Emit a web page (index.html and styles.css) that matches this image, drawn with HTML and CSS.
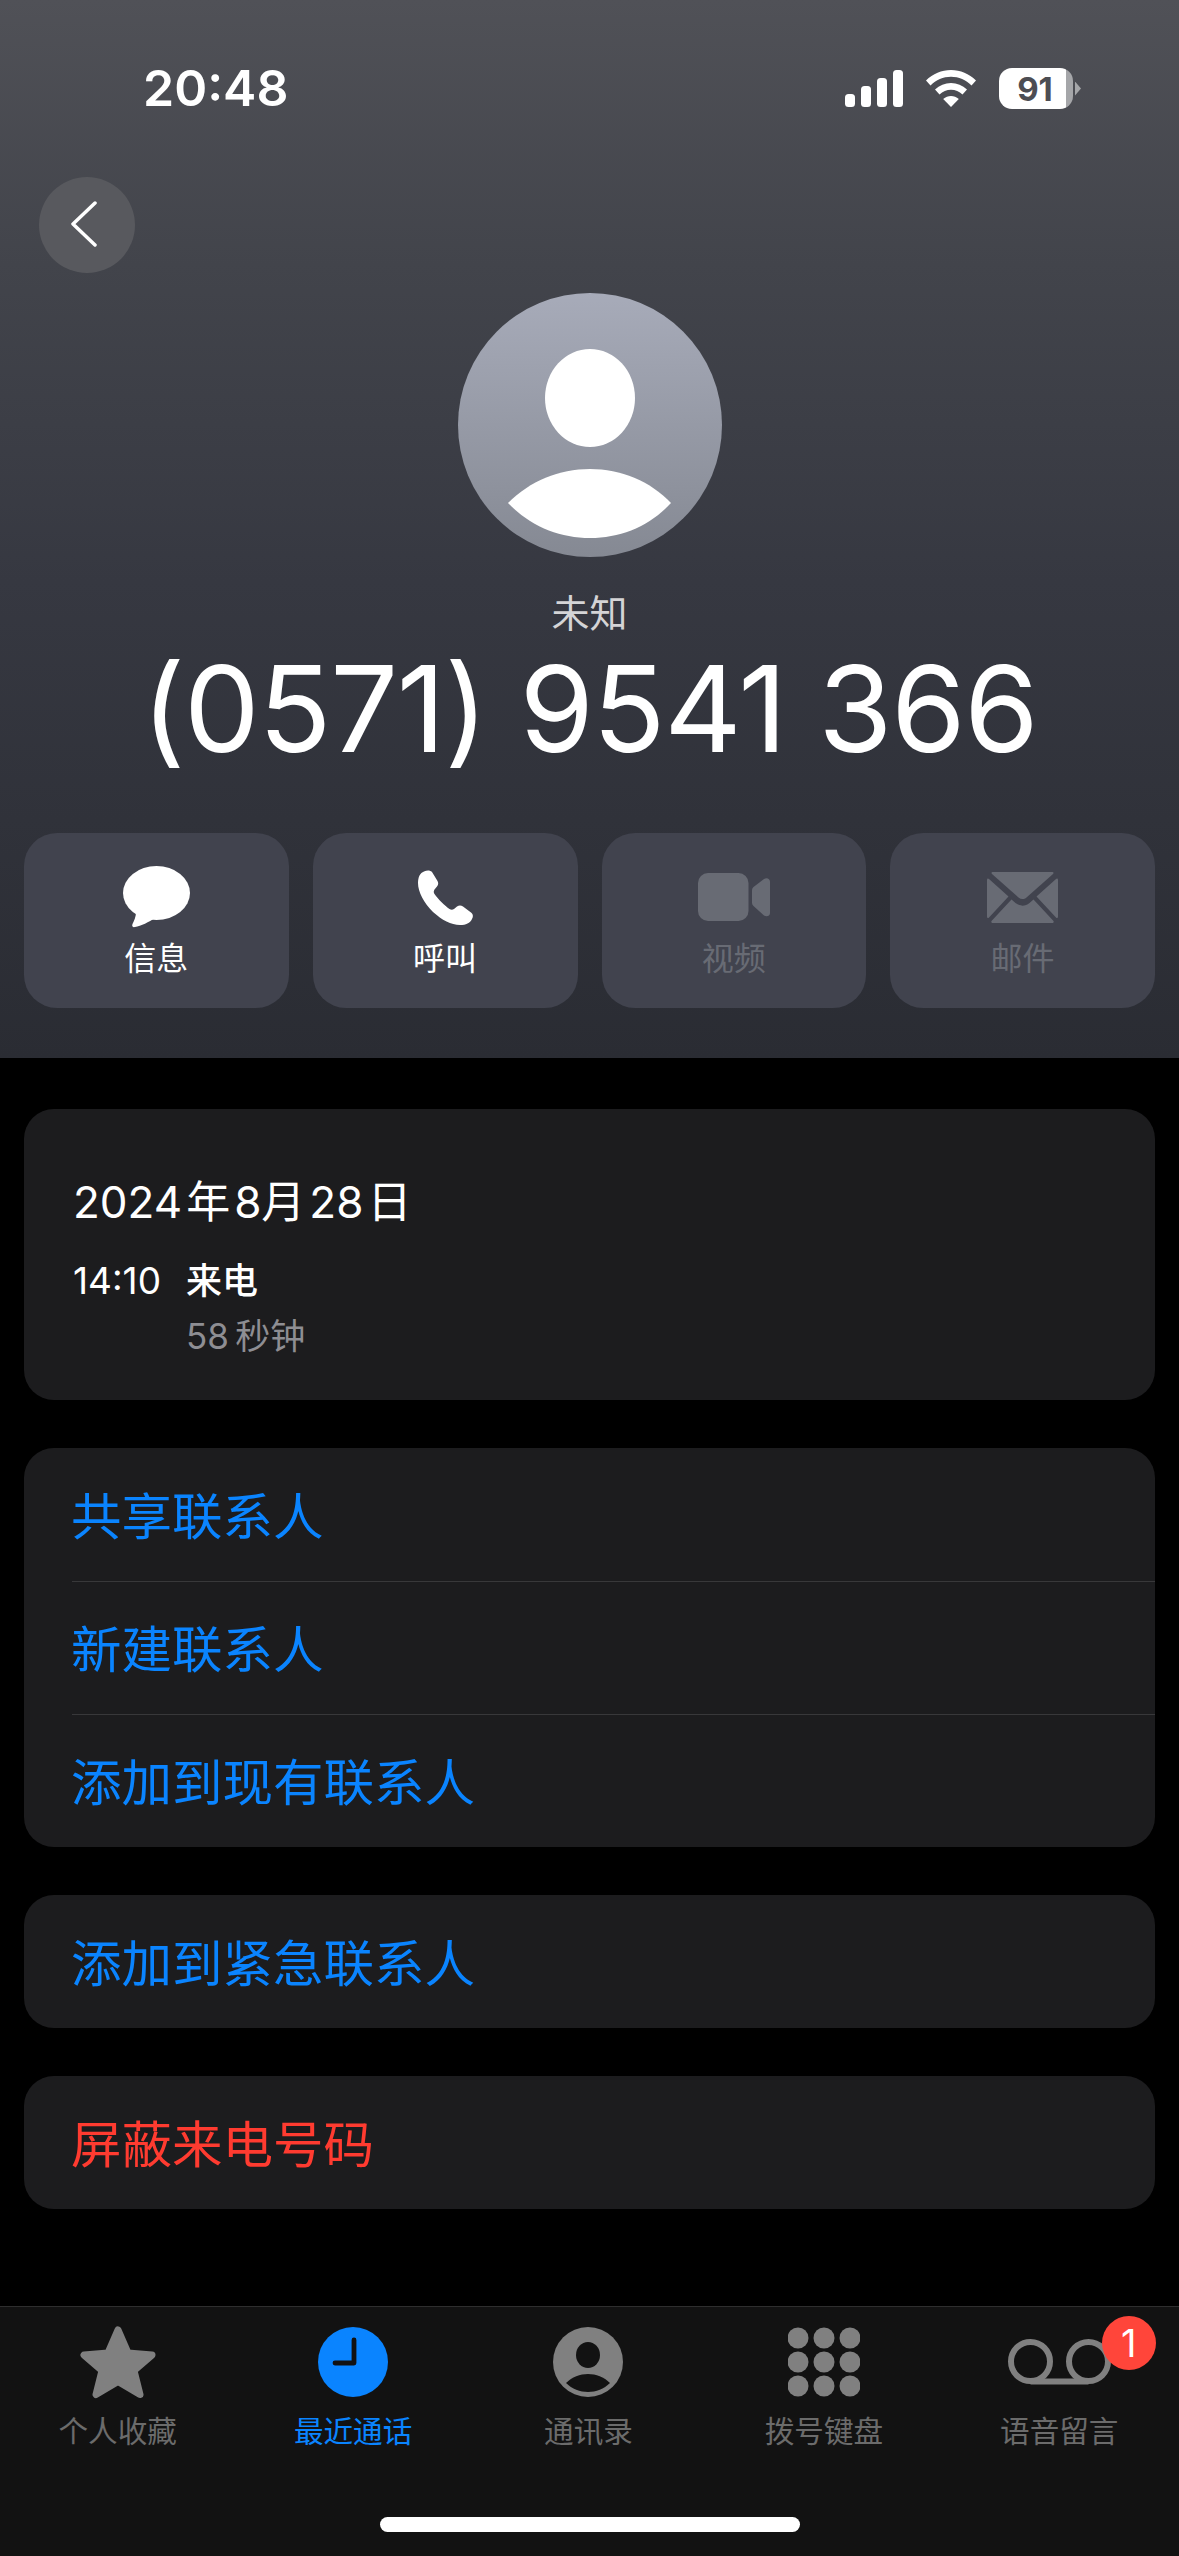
FILE: index.html
```html
<!DOCTYPE html>
<html lang="zh-CN">
<head>
  <meta charset="UTF-8">
  <meta name="viewport" content="width=device-width, initial-scale=1.0">
  <title>未知</title>
  <link rel="stylesheet" href="styles.css">
</head>
<body>
  <div class="page">
    <header class="hero">
      <div class="status">
        <span class="time">20:48</span>
        <div class="status-icons">
          <svg class="signal" width="58" height="37" viewBox="0 0 58 37"><rect x="0" y="24" width="10" height="13" rx="3.5"/><rect x="16" y="16" width="10" height="21" rx="3.5"/><rect x="32" y="8" width="10" height="29" rx="3.5"/><rect x="48" y="0" width="10" height="37" rx="3.5"/></svg>
          <svg class="wifi" width="50" height="37" viewBox="0 0 50 37"><path d="M25 0C34.500 0 43 3.800 50 10.500L45.500 15.500C40 10 32.800 6.800 25 6.800S10 10 4.500 15.500L0 10.500C7 3.800 15.500 0 25 0Z"/><path d="M25 13C31 13 36.500 15.400 41 19.500L36.500 24.500C33.300 21.500 29.300 19.800 25 19.800S16.700 21.500 13.500 24.500L9 19.500C13.500 15.400 19 13 25 13Z"/><path d="M25 26C27.800 26 30.500 27 32.800 29L25 37L17.200 29C19.500 27 22.200 26 25 26Z"/></svg>
          <div class="battery">
            <div class="battery-body"><span class="battery-level">91</span></div>
            <span class="battery-nub"></span>
          </div>
        </div>
      </div>

      <button class="back">
        <svg width="28" height="46" viewBox="0 0 28 46"><path d="M25 2L3 23L25 44" fill="none" stroke="#fff" stroke-width="3.500" stroke-linecap="round" stroke-linejoin="round"/></svg>
      </button>

      <div class="avatar">
        <svg width="264" height="264" viewBox="0 0 264 264">
          <ellipse cx="132" cy="105" rx="45" ry="49" fill="#fff"/>
          <path d="M50 210C72 188 101 176 132 176S192 188 213 210C192 233 163 245 132 245S72 233 50 210Z" fill="#fff"/>
        </svg>
      </div>
      <div class="caption">未知</div>
      <div class="number">(0571) 9541 366</div>

      <div class="actions">
        <div class="action">
          <div class="action-icon">
            <svg width="67" height="62" viewBox="0 0 67 62"><ellipse cx="33.500" cy="27" rx="33.500" ry="27" fill="#fff"/><path d="M13 46C13 51 11 55 9.500 58C8.500 60.500 10 61.500 12 61C18 60 26 56 32 52Z" fill="#fff"/></svg>
          </div>
          <span>信息</span>
        </div>
        <div class="action">
          <div class="action-icon">
            <svg width="55" height="55" viewBox="0 0 55 55"><path d="M6 1.500C2 3 0 7 0 13C0 22 6 33 15 42C24 50 33 55 42 55C48 55 52 53 54 49C55.500 46 55 44 53 42.500L45 36.500C43 35 41 35 39 36.500L36 39C34.500 40 33 40 31.500 39C27 36 20 29 16.500 24C15.500 22.500 15.500 21 16.500 19.500L19 16.500C20.500 14.500 20.500 13 19.500 11L14 2C12 0 9 0 6 1.500Z" fill="#fff"/></svg>
          </div>
          <span>呼叫</span>
        </div>
        <div class="action off">
          <div class="action-icon">
            <svg width="72" height="48" viewBox="0 0 72 48"><rect width="50.500" height="48" rx="10"/><path d="M54 17.500C54 16 54.500 15 55.500 14L66 6C68.500 4.200 72 5.500 72 8.500V40C72 43 68.500 44.300 66 42.500L55.500 33C54.500 32 54 31 54 29.500Z"/></svg>
          </div>
          <span>视频</span>
        </div>
        <div class="action off">
          <div class="action-icon">
            <svg width="71" height="51" viewBox="0 0 71 51"><path d="M6 0H65C66.500 0 67 1 66 2L39.500 25.500C37 27.500 34 27.500 31.500 25.500L5 2C4 1 4.500 0 6 0Z"/><path d="M0 8C0 6.500 1 6 2 7L21.500 24.500L2 45.500C1 46.500 0 46 0 44.500Z"/><path d="M71 8C71 6.500 70 6 69 7L49.500 24.500L69 45.500C70 46.500 71 46 71 44.500Z"/><path d="M24.500 27.500L28.500 31C33 34.500 38 34.500 42.500 31L46.500 27.500L66.500 49C67 50 66.500 51 65 51H6C4.500 51 4 50 4.500 49Z"/></svg>
          </div>
          <span>邮件</span>
        </div>
      </div>
    </header>

    <main class="content">
      <section class="card history">
        <div class="date">2024&#8202;年&#8202;8月&#8202;28&#8202;日</div>
        <div class="call">
          <span class="call-time">14:10</span>
          <div>
            <div class="call-type">来电</div>
            <div class="call-length">58&thinsp;秒钟</div>
          </div>
        </div>
      </section>

      <section class="card">
        <div class="row">共享联系人</div>
        <div class="row">新建联系人</div>
        <div class="row">添加到现有联系人</div>
      </section>

      <section class="card">
        <div class="row">添加到紧急联系人</div>
      </section>

      <section class="card">
        <div class="row danger">屏蔽来电号码</div>
      </section>
    </main>

    <nav class="tabbar">
      <div class="tabs">
        <div class="tab">
          <div class="tab-icon">
            <svg width="76" height="73" viewBox="0 0 76 73"><path d="M38 4L48 27L72 29L54 44.500L60 68.500L38 55.500L16 68.500L22 44.500L4 29L28 27Z" fill="#808080" stroke="#808080" stroke-width="7" stroke-linejoin="round"/></svg>
          </div>
          <span>个人收藏</span>
        </div>
        <div class="tab active">
          <div class="tab-icon">
            <svg width="70" height="70" viewBox="0 0 70 70"><circle cx="35" cy="35" r="35" fill="#0a84ff"/><path d="M36 13V36H17" fill="none" stroke="#121212" stroke-width="4.800" stroke-linecap="round" stroke-linejoin="round"/></svg>
          </div>
          <span>最近通话</span>
        </div>
        <div class="tab">
          <div class="tab-icon">
            <svg width="70" height="70" viewBox="0 0 70 70"><circle cx="35" cy="35" r="35" fill="#808080"/><ellipse cx="35" cy="28" rx="12" ry="13" fill="#121212"/><path d="M13 56C19 50 27 47 35 47S51 50 57 56C51 62 43 65 35 65S19 62 13 56Z" fill="#121212"/></svg>
          </div>
          <span>通讯录</span>
        </div>
        <div class="tab">
          <div class="tab-icon">
            <svg width="72" height="70" viewBox="0 0 72 70" fill="#808080"><circle cx="10" cy="11" r="10.500"/><circle cx="36" cy="11" r="10.500"/><circle cx="62" cy="11" r="10.500"/><circle cx="10" cy="35" r="10.500"/><circle cx="36" cy="35" r="10.500"/><circle cx="62" cy="35" r="10.500"/><circle cx="10" cy="59" r="10.500"/><circle cx="36" cy="59" r="10.500"/><circle cx="62" cy="59" r="10.500"/></svg>
          </div>
          <span>拨号键盘</span>
        </div>
        <div class="tab">
          <div class="tab-icon">
            <svg width="103" height="46" viewBox="0 0 103 46"><path d="M22.500 42.500H80.500" stroke="#808080" stroke-width="6" fill="none"/><circle cx="22.500" cy="22.500" r="19.500" fill="none" stroke="#808080" stroke-width="6"/><circle cx="80.500" cy="22.500" r="19.500" fill="none" stroke="#808080" stroke-width="6"/></svg>
            <span class="badge">1</span>
          </div>
          <span>语音留言</span>
        </div>
      </div>
      <div class="home"></div>
    </nav>
  </div>
</body>
</html>
```

FILE: styles.css
```css
* {
  box-sizing: border-box;
}
html, body {
  margin: 0;
  padding: 0;
  background-color: #000000;
}
body {
  font-family: Inter, "Noto Sans CJK SC", sans-serif;
  color: #ffffff;
}
.page {
  width: 1179px;
  height: 2556px;
  display: flex;
  flex-direction: column;
  overflow: hidden;
}

/* top part */
.hero {
  height: 1058px;
  background: linear-gradient(180deg, #505157 0%, #42444b 25%, #363841 55%, #2a2c33 100%);
  padding: 0 24px;
  display: flex;
  flex-direction: column;
  align-items: center;
  flex-shrink: 0;
}
.status {
  width: 100%;
  height: 110px;
  padding: 68px 0 0 119px;
  display: flex;
  justify-content: space-between;
  align-items: flex-start;
}
.time {
  font-size: 50px;
  line-height: 41px;
  font-weight: 600;
}
.status-icons {
  display: flex;
  align-items: center;
  gap: 23px;
  padding: 0 74px 0 0;
}
.signal, .wifi {
  fill: #ffffff;
}
.battery {
  display: flex;
  align-items: center;
  gap: 2px;
}
.battery-body {
  width: 74px;
  height: 41px;
  border-radius: 13px;
  background: linear-gradient(90deg, #ffffff 91%, #a5a6a9 91%);
  display: flex;
  align-items: center;
  justify-content: center;
  padding-right: 2px;
}
.battery-level {
  font-size: 33px;
  font-weight: 700;
  color: #4c4d53;
}
.battery-nub {
  width: 6px;
  height: 14px;
  background-color: #a5a6a9;
  clip-path: polygon(0 0, 100% 50%, 0 100%);
}
.back {
  align-self: flex-start;
  width: 96px;
  height: 96px;
  margin: 67px 0 0 15px;
  padding: 0 6px 2px 0;
  border: none;
  border-radius: 50%;
  background-color: #58595e;
  display: flex;
  align-items: center;
  justify-content: center;
}
.avatar {
  width: 264px;
  height: 264px;
  margin-top: 20px;
  border-radius: 50%;
  background: linear-gradient(180deg, #a7abb9 0%, #858993 100%);
}
.caption {
  margin-top: 34px;
  font-size: 38px;
  line-height: 44px;
  color: #d4d4d6;
}
.number {
  margin-top: 14px;
  font-size: 120px;
  line-height: 120px;
  font-weight: 400;
  letter-spacing: -1.25px;
  white-space: nowrap;
}
.actions {
  width: 100%;
  margin-top: 64px;
  display: grid;
  grid-template-columns: repeat(4, 1fr);
  gap: 24px;
}
.action {
  height: 175px;
  border-radius: 33px;
  background-color: #41434e;
  display: flex;
  flex-direction: column;
  align-items: center;
  padding-top: 33px;
  font-size: 32px;
  line-height: 46px;
}
.action-icon {
  height: 62px;
  display: flex;
  align-items: center;
  justify-content: center;
  margin-bottom: 8px;
}
.action.off {
  color: #686b74;
}
.action.off svg {
  fill: #686b74;
}

/* lists */
.content {
  flex: 1;
  padding: 51px 24px 0;
  display: flex;
  flex-direction: column;
  gap: 48px;
}
.card {
  background-color: #1c1c1e;
  border-radius: 30px;
}
.history {
  height: 291px;
  padding: 68px 49px 0;
}
.date {
  font-size: 44px;
  line-height: 50px;
}
.call {
  margin-top: 31px;
  display: flex;
  gap: 14px;
}
.call-time {
  font-size: 37px;
  line-height: 46px;
  width: 99px;
}
.call-type {
  font-size: 36px;
  line-height: 46px;
  font-weight: 500;
}
.call-length {
  margin-top: 9px;
  font-size: 35px;
  line-height: 46px;
  color: #8e8e93;
}
.row {
  height: 133px;
  margin-left: 48px;
  padding-bottom: 4px;
  display: flex;
  align-items: center;
  font-size: 50.500px;
  text-indent: -1px;
  color: #0a84ff;
}
.row + .row {
  border-top: 1px solid #38383a;
}
.danger {
  color: #ff3b30;
}

/* bottom bar */
.tabbar {
  height: 250px;
  flex-shrink: 0;
  background-color: #121212;
  border-top: 1px solid #2e2e2e;
  position: relative;
}
.tabs {
  display: grid;
  grid-template-columns: repeat(5, 1fr);
  padding: 18px 2px 0 0;
}
.tab {
  display: flex;
  flex-direction: column;
  align-items: center;
  font-size: 29.600px;
  line-height: 42px;
  color: #6b6b6b;
}
.tab.active {
  color: #0a84ff;
}
.tab-icon {
  height: 74px;
  display: flex;
  align-items: center;
  justify-content: center;
  margin-bottom: 11px;
  position: relative;
}
.badge {
  position: absolute;
  top: -9px;
  right: -45px;
  width: 54px;
  height: 54px;
  border-radius: 50%;
  background-color: #ff453a;
  color: #ffffff;
  font-size: 38px;
  line-height: 54px;
  text-align: center;
}
.home {
  position: absolute;
  left: 380px;
  bottom: 24px;
  width: 420px;
  height: 15px;
  border-radius: 8px;
  background-color: #ffffff;
}
```
